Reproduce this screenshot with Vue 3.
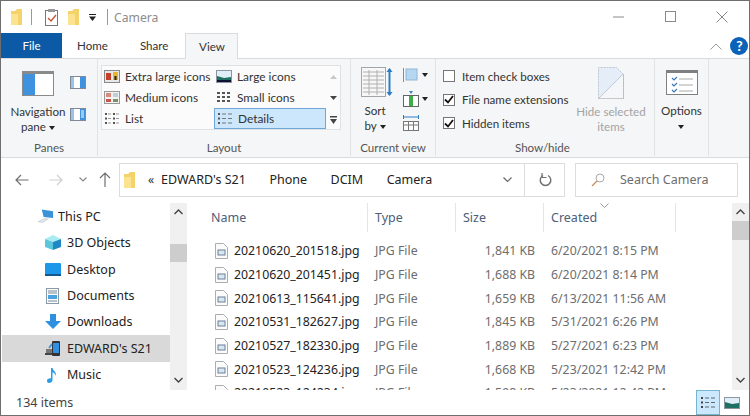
<template>
  <div class="window">
    <!-- title bar -->
    <div class="titlebar">
      <svg class="t-folder" width="11" height="16" viewBox="0 0 11 16"><path d="M0 2h4l2-2h5v16H0z" fill="#f5d36c"/><path d="M0 5h7v11H0z" fill="#fbe38f"/></svg>
      <span class="t-div t-div-a"></span>
      <svg class="t-check" width="14" height="17" viewBox="0 0 14 17"><rect x=".5" y="1.5" width="12" height="15" fill="#fff" stroke="#777"/><rect x="3" y="0" width="7" height="3" fill="#999"/><path d="M3 9l3 3 5-6" fill="none" stroke="#c9502c" stroke-width="1.3"/></svg>
      <svg class="t-folder t-folder-b" width="11" height="16" viewBox="0 0 11 16"><path d="M0 2h4l2-2h5v16H0z" fill="#f5d36c"/><path d="M0 5h7v11H0z" fill="#fbe38f"/></svg>
      <svg class="t-drop" width="7" height="7" viewBox="0 0 7 7"><path d="M0 0h7v1H0zM0 2.500h7L3.500 7z" fill="#222"/></svg>
      <span class="t-div t-div-b"></span>
      <span class="t-name">Camera</span>
      <div class="win-btns">
        <svg width="12" height="12" viewBox="0 0 12 12"><path d="M0 6h11" stroke="#8a8a8a"/></svg>
        <svg width="12" height="12" viewBox="0 0 12 12"><rect x=".5" y=".5" width="10" height="10" fill="none" stroke="#8a8a8a"/></svg>
        <svg width="12" height="12" viewBox="0 0 12 12"><path d="M.5.500l11 11M11.500.500l-11 11" stroke="#8a8a8a"/></svg>
      </div>
    </div>

    <!-- tabs -->
    <div class="tabs">
      <div class="tab-file">File</div>
      <div class="tab tab-home">Home</div>
      <div class="tab tab-share">Share</div>
      <div class="tab-view">View</div>
      <svg class="collapse" width="12" height="7" viewBox="0 0 12 7"><path d="M.5 6.500L6 1l5.500 5.500" fill="none" stroke="#9a9a9a"/></svg>
      <div class="help">?</div>
    </div>

    <!-- ribbon -->
    <div class="ribbon">
      <div class="group g-panes">
        <div class="group-body panes-body">
          <div class="big-col nav-pane">
            <svg width="32" height="25" viewBox="0 0 32 25"><rect x=".5" y=".5" width="31" height="24" fill="#fff" stroke="#8a8a8a"/><rect x="1" y="1" width="30" height="2" fill="#8a8a8a"/><rect x="1" y="3" width="12" height="21" fill="#3f92e0"/></svg>
            <div class="big-label">Navigation<br>pane <i class="caret"></i></div>
          </div>
          <div class="pane-minis">
            <svg width="16" height="13" viewBox="0 0 16 13"><rect x=".5" y=".5" width="15" height="12" fill="#fff" stroke="#7f8a96"/><rect x="10" y="1" width="5" height="11" fill="#3f92e0"/><rect x="1" y="1" width="3" height="11" fill="#9ac3ea"/></svg>
            <svg width="16" height="13" viewBox="0 0 16 13"><rect x=".5" y=".5" width="15" height="12" fill="#fff" stroke="#7f8a96"/><rect x="10" y="1" width="5" height="11" fill="#3f92e0"/><path d="M11 3h3M11 5h3M11 7h3M11 9h3" stroke="#fff"/><rect x="1" y="1" width="3" height="11" fill="#9ac3ea"/></svg>
          </div>
        </div>
        <div class="group-label">Panes</div>
      </div>

      <div class="group g-layout">
        <div class="group-body">
          <div class="gallery">
            <div class="gal-grid">
              <div v-for="v in layouts" :key="v.name" :class="['gal-item', { selected: v.selected }]">
                <svg width="16" height="13" viewBox="0 0 16 13">
                  <template v-if="v.icon === 'xl'">
                    <rect x=".5" y=".5" width="15" height="12" fill="#e8e8e8" stroke="#888"/><rect x="2" y="3" width="5" height="7" fill="#c2402c"/><rect x="9" y="2" width="5" height="8" fill="#e8b52c"/><rect x="10.500" y="6" width="2" height="4" fill="#222"/>
                  </template>
                  <template v-else-if="v.icon === 'large'">
                    <rect x=".5" y=".5" width="15" height="12" fill="#dfeef7" stroke="#8a96a0"/><path d="M1 6l7 2 7-1v5H1z" fill="#1f6f63"/><path d="M1 10h14v2H1z" fill="#113"/>
                  </template>
                  <template v-else-if="v.icon === 'medium'">
                    <rect x=".5" y=".5" width="15" height="12" fill="#f2f2f2" stroke="#999"/><rect x="2" y="2" width="5" height="4" fill="#d98a7a"/><rect x="9" y="2" width="5" height="4" fill="#bcd0dc"/><rect x="2" y="8" width="5" height="3" fill="#c9544a"/><rect x="9" y="8" width="5" height="3" fill="#7a8f6a"/>
                  </template>
                  <template v-else-if="v.icon === 'small'">
                    <path d="M1 1h3v2H1zM6 1h3v2H6zM11 1h3v2h-3zM1 5h3v2H1zM6 5h3v2H6zM11 5h3v2h-3zM1 9h3v2H1zM6 9h3v2H6zM11 9h3v2h-3z" fill="#555"/>
                  </template>
                  <template v-else-if="v.icon === 'list'">
                    <path d="M1 1h2v2H1zM1 5.500h2v2H1zM1 10h2v2H1zM9 1h2v2H9zM9 5.500h2v2H9zM9 10h2v2H9z" fill="#555"/><path d="M4 2h3M4 6.500h3M4 11h3M12 2h3M12 6.500h3M12 11h3" stroke="#999"/>
                  </template>
                  <template v-else>
                    <path d="M1 1h2v2H1zM1 5.500h2v2H1zM1 10h2v2H1z" fill="#555"/><path d="M5 2h4M11 2h4M5 6.500h4M11 6.500h4M5 11h4M11 11h4" stroke="#777"/>
                  </template>
                </svg>
                <span>{{ v.name }}</span>
              </div>
            </div>
            <div class="gal-scroll">
              <svg width="7" height="6" viewBox="0 0 7 6"><path d="M0 5l3.500-4L7 5z" fill="#c8c8c8"/></svg>
              <svg width="7" height="6" viewBox="0 0 7 6"><path d="M0 1h7L3.500 5z" fill="#444"/></svg>
              <svg width="7" height="8" viewBox="0 0 7 8"><path d="M0 0h7v1.500H0zM0 3h7L3.500 8z" fill="#444"/></svg>
            </div>
          </div>
        </div>
        <div class="group-label">Layout</div>
      </div>

      <div class="group g-view">
        <div class="group-body view-body">
          <div class="big-col sort">
            <svg width="32" height="31" viewBox="0 0 32 31"><rect x=".5" y=".5" width="24" height="29" fill="#f7f7f7" stroke="#a5a5a5"/><path d="M2 5h21M2 9h21M2 13h21M2 17h21M2 21h21M2 25h21M8 3v25M16 3v25" stroke="#b0b0b0"/><path d="M28.500 2v26" stroke="#2e7cc4" stroke-width="2"/><path d="M25.500 5l3-4 3 4zM25.500 25l3 4 3-4z" fill="#2e7cc4"/></svg>
            <div class="big-label">Sort<br>by <i class="caret"></i></div>
          </div>
          <div class="view-minis">
            <div class="mini-row">
              <svg width="16" height="16" viewBox="0 0 16 16"><path d="M.5 1v14" stroke="#8a8a8a"/><rect x="3" y="2" width="11" height="11" fill="#b6d7f2" stroke="#8fb5d6"/></svg>
              <i class="caret"></i>
            </div>
            <div class="mini-row">
              <svg width="16" height="16" viewBox="0 0 16 16"><rect x=".5" y="4.500" width="15" height="11" fill="#fff" stroke="#666"/><rect x="6" y="5" width="4" height="10" fill="#3fae49"/><path d="M6 0h4L8 3z" fill="#3f7fc4"/></svg>
              <i class="caret"></i>
            </div>
            <div class="mini-row">
              <svg width="16" height="16" viewBox="0 0 16 16"><path d="M.5 0v4M15.500 0v4M1 2h14" stroke="#2e7cc4"/><rect x=".5" y="6.500" width="15" height="9" fill="#fff" stroke="#777"/><path d="M1 10h14M5.500 7v8M10.500 7v8" stroke="#777"/></svg>
            </div>
          </div>
        </div>
        <div class="group-label">Current view</div>
      </div>

      <div class="group g-show">
        <div class="group-body show-body">
          <div class="checks">
            <div v-for="c in checks" :key="c.label" class="check-row">
              <span class="box">
                <svg v-if="c.on" width="10" height="9" viewBox="0 0 10 9"><path d="M1 4.500l3 3L9 1" fill="none" stroke="#111" stroke-width="1.800"/></svg>
              </span>
              <span>{{ c.label }}</span>
            </div>
          </div>
          <div class="big-col hide-sel">
            <svg width="26" height="32" viewBox="0 0 26 32"><path d="M.5.500h18l7 7v24H.5z" fill="#e4edf8"/><path d="M.5 31.500V.5h18l7 7v24z" fill="none" stroke="#bcc5d0" stroke-dasharray="2 1"/><path d="M1 31L25 7" stroke="#c4ccd6"/><path d="M25 31.500V8L1.500 31.500z" fill="#f5f6f7"/><path d="M.5 31.500h25V7" fill="none" stroke="#aaa" stroke-dasharray="1 1"/></svg>
            <div class="big-label muted">Hide selected<br>items</div>
          </div>
        </div>
        <div class="group-label label-show">Show/hide</div>
      </div>

      <div class="group g-options">
        <div class="group-body">
          <div class="big-col options">
            <svg width="32" height="25" viewBox="0 0 32 25"><rect x=".5" y=".5" width="31" height="24" fill="#fff" stroke="#808080"/><rect x="1" y="1" width="30" height="2" fill="#808080"/><path d="M6 8l2 2 3-3M6 14l2 2 3-3M6 20l2 2 3-3" fill="none" stroke="#3a78b8" stroke-width="1.200"/><path d="M13 9h14M13 15h14M13 21h14" stroke="#aaa"/></svg>
            <div class="big-label">Options<br><i class="caret"></i></div>
          </div>
        </div>
      </div>
    </div>

    <!-- address row -->
    <div class="navrow">
      <svg width="14" height="12" viewBox="0 0 14 12"><path d="M13.500 6H1M6 1L1 6l5 5" fill="none" stroke="#6f6f6f" stroke-width="1.200"/></svg>
      <svg class="fwd" width="14" height="12" viewBox="0 0 14 12"><path d="M.5 6H13M8 1l5 5-5 5" fill="none" stroke="#d0d0d0" stroke-width="1.200"/></svg>
      <svg class="recent" width="8" height="5" viewBox="0 0 8 5"><path d="M.5.500L4 4 7.500.5" fill="none" stroke="#8a8a8a" stroke-width="1.200"/></svg>
      <svg class="up" width="12" height="15" viewBox="0 0 12 15"><path d="M6 15V1M1 6l5-5 5 5" fill="none" stroke="#6f6f6f" stroke-width="1.200"/></svg>
      <div class="address">
        <svg class="addr-folder" width="11" height="16" viewBox="0 0 11 16"><path d="M0 2h4l2-2h5v16H0z" fill="#f5d36c"/><path d="M0 5h7v11H0z" fill="#fbe38f"/></svg>
        <span class="crumb-more">«</span>
        <div class="crumbs">
          <span v-for="c in crumbs" :key="c">{{ c }}</span>
        </div>
        <svg class="addr-chev" width="9" height="6" viewBox="0 0 9 6"><path d="M.5.500l4 4 4-4" fill="none" stroke="#666" stroke-width="1.200"/></svg>
        <div class="refresh">
          <svg width="13" height="14" viewBox="0 0 13 14"><path d="M4 2.500a5.300 5.300 0 1 0 5 0" fill="none" stroke="#6f6f6f" stroke-width="1.400"/><path d="M3 0v4.500h4.500" fill="none" stroke="#6f6f6f" stroke-width="1.200"/></svg>
        </div>
      </div>
      <div class="search">
        <svg width="14" height="14" viewBox="0 0 14 14"><circle cx="9" cy="5" r="4" fill="none" stroke="#a9a9a9"/><path d="M6 8l-5 5" stroke="#c58f5a" stroke-width="1.200"/></svg>
        <span>Search Camera</span>
      </div>
    </div>

    <!-- content -->
    <div class="content">
      <div class="tree">
        <div class="tree-list">
          <div class="tree-item root">
            <svg width="17" height="16" viewBox="0 0 17 16"><path d="M4 1l12 2v7L6 9z" fill="#3a93d8"/><path d="M0 14l6-3h5l-6 4z" fill="#dfe4ea" stroke="#b5bcc4" stroke-width=".5"/></svg>
            <span>This PC</span>
          </div>
          <div class="tree-item">
            <svg width="16" height="15" viewBox="0 0 16 15"><path d="M0 4l8-4 8 4-8 3z" fill="#a8ecf2"/><path d="M0 4l8 3v8l-8-3z" fill="#5cc6dc"/><path d="M16 4L8 7v8l8-3z" fill="#1e88c4"/></svg>
            <span>3D Objects</span>
          </div>
          <div class="tree-item">
            <svg width="16" height="13" viewBox="0 0 16 13"><rect x="0" y="0" width="16" height="12" rx="1" fill="#1e96ea"/><rect x="0" y="11" width="16" height="2" fill="#17578f"/></svg>
            <span>Desktop</span>
          </div>
          <div class="tree-item">
            <svg width="14" height="16" viewBox="0 0 14 16"><rect x=".5" y=".5" width="12" height="15" fill="#fbfbfb" stroke="#8a9aa8"/><path d="M2 3h9M2 5h9" stroke="#7a8a98"/><rect x="2" y="7" width="9" height="4" fill="#4aa3df"/><path d="M2 13h9" stroke="#7a8a98"/></svg>
            <span>Documents</span>
          </div>
          <div class="tree-item">
            <svg width="16" height="15" viewBox="0 0 16 15"><path d="M5 0h6v7h5l-8 8-8-8h5z" fill="#2f8fe0"/></svg>
            <span>Downloads</span>
          </div>
          <div class="tree-item current">
            <svg width="16" height="17" viewBox="0 0 16 17"><rect x="7" y="1" width="8" height="15" rx="1" fill="#333"/><rect x="8" y="3" width="6" height="10" fill="#2f8fe0"/><rect x="1" y="9" width="6" height="4" fill="#777"/><path d="M0 13h7v2H0z" fill="#444"/><path d="M4 8l3-4" stroke="#2f8fe0" stroke-width="1.500"/></svg>
            <span>EDWARD's S21</span>
          </div>
          <div class="tree-item">
            <svg width="16" height="16" viewBox="0 0 16 16"><path d="M6 1h1.500c.5 3 4.500 3.500 3 8-.3-2.500-2-3.500-3-3.800V13c0 1.800-2 3-3.500 3S2 15 2 13.500 4 11 6 11.300z" fill="#2b9be8"/></svg>
            <span>Music</span>
          </div>
        </div>
        <div class="scrollbar">
          <svg width="9" height="6" viewBox="0 0 9 6"><path d="M.5 5l4-4 4 4" fill="none" stroke="#444" stroke-width="1.400"/></svg>
          <div class="thumb thumb-tree"></div>
          <svg class="sb-down" width="9" height="6" viewBox="0 0 9 6"><path d="M.5 1l4 4 4-4" fill="none" stroke="#444" stroke-width="1.400"/></svg>
        </div>
      </div>

      <div class="files">
        <div class="file-area">
          <div class="file-head">
            <div class="col-name head-cell">Name</div>
            <div class="col-type head-cell">Type</div>
            <div class="col-size head-cell">Size</div>
            <div class="col-date head-cell">
              Created
              <svg class="sort-chev" width="9" height="5" viewBox="0 0 9 5"><path d="M.5.500l4 4 4-4" fill="none" stroke="#9a9a9a"/></svg>
            </div>
          </div>
          <div class="file-list">
            <div v-for="f in files" :key="f.name" class="file-row">
              <div class="col-name name-cell">
                <svg width="13" height="16" viewBox="0 0 13 16"><path d="M.5.500h8l4 4v11H.5z" fill="#fbfbfb" stroke="#a8aeb4"/><rect x="3" y="7" width="7" height="5" fill="#dbe7f0" stroke="#68809a"/></svg>
                <span>{{ f.name }}</span>
              </div>
              <div class="col-type muted-cell">JPG File</div>
              <div class="col-size muted-cell">{{ f.size }}</div>
              <div class="col-date muted-cell">{{ f.date }}</div>
            </div>
          </div>
        </div>
        <div class="scrollbar">
          <svg width="9" height="6" viewBox="0 0 9 6"><path d="M.5 5l4-4 4 4" fill="none" stroke="#444" stroke-width="1.400"/></svg>
          <div class="thumb thumb-files"></div>
          <svg class="sb-down" width="9" height="6" viewBox="0 0 9 6"><path d="M.5 1l4 4 4-4" fill="none" stroke="#444" stroke-width="1.400"/></svg>
        </div>
      </div>
    </div>

    <!-- status bar -->
    <div class="status">
      <span>134 items</span>
      <div class="view-btns">
        <div class="vbtn active">
          <svg width="16" height="13" viewBox="0 0 16 13"><path d="M1 1h2v2H1zM1 5.500h2v2H1zM1 10h2v2H1z" fill="#444"/><path d="M5 2h4M11 2h4M5 6.500h4M11 6.500h4M5 11h4M11 11h4" stroke="#666"/></svg>
        </div>
        <div class="vbtn plain">
          <svg width="16" height="12" viewBox="0 0 16 12"><rect x=".5" y=".5" width="15" height="11" fill="#dfeef7" stroke="#8a96a0"/><path d="M1 5l7 2 7-1v5H1z" fill="#1f6f63"/></svg>
        </div>
      </div>
    </div>
  </div>
</template>

<script setup>
const layouts = [
  { name: 'Extra large icons', icon: 'xl' },
  { name: 'Large icons', icon: 'large' },
  { name: 'Medium icons', icon: 'medium' },
  { name: 'Small icons', icon: 'small' },
  { name: 'List', icon: 'list' },
  { name: 'Details', icon: 'details', selected: true },
]

const checks = [
  { label: 'Item check boxes', on: false },
  { label: 'File name extensions', on: true },
  { label: 'Hidden items', on: true },
]

const crumbs = ["EDWARD's S21", 'Phone', 'DCIM', 'Camera']

const files = [
  { name: '20210620_201518.jpg', size: '1,841 KB', date: '6/20/2021 8:15 PM' },
  { name: '20210620_201451.jpg', size: '1,688 KB', date: '6/20/2021 8:14 PM' },
  { name: '20210613_115641.jpg', size: '1,659 KB', date: '6/13/2021 11:56 AM' },
  { name: '20210531_182627.jpg', size: '1,845 KB', date: '5/31/2021 6:26 PM' },
  { name: '20210527_182330.jpg', size: '1,889 KB', date: '5/27/2021 6:23 PM' },
  { name: '20210523_124236.jpg', size: '1,668 KB', date: '5/23/2021 12:42 PM' },
  { name: '20210523_124234.jpg', size: '1,598 KB', date: '5/23/2021 12:42 PM' },
]
</script>

<style>
html, body { margin: 0; background: #fff; }
</style>

<style scoped>
.window {
  width: 750px;
  height: 416px;
  box-sizing: border-box;
  border: 1px solid #6e6e6e;
  display: flex;
  flex-direction: column;
  overflow: hidden;
  background: #fff;
  font-family: "Noto Sans", "Open Sans", sans-serif;
  font-size: 12.5px;
  color: #333;
}

/* title bar */
.titlebar {
  height: 32px;
  display: flex;
  align-items: center;
  flex: none;
}
.t-folder { margin-left: 10px; }
.t-div { width: 1px; height: 16px; background: #999; }
.t-div-a { margin-left: 9px; }
.t-check { margin-left: 13px; }
.t-folder-b { margin-left: 9px; }
.t-drop { margin-left: 10px; }
.t-div-b { margin-left: 11px; }
.t-name { margin-left: 6px; font-size: 12.2px; color: #8c8c8c; }
.win-btns {
  margin-left: auto;
  width: 115px;
  margin-right: 21px;
  display: flex;
  justify-content: space-between;
}

/* tabs */
.tabs {
  height: 25px;
  flex: none;
  display: flex;
  align-items: stretch;
  position: relative;
  font-family: Lato, "Noto Sans", sans-serif;
  font-size: 11.6px;
}
.tab-file {
  width: 61px;
  background: #0c5aa6;
  color: #fff;
  display: flex;
  align-items: center;
  justify-content: center;
}
.tab { display: flex; align-items: center; }
.tab-home { margin-left: 15px; }
.tab-share { margin-left: 32px; }
.tab-view {
  margin-left: 17px;
  width: 53px;
  box-sizing: border-box;
  height: 26px;
  background: #f5f6f7;
  border: 1px solid #dadbdc;
  border-bottom: none;
  display: flex;
  align-items: center;
  justify-content: center;
  position: relative;
  z-index: 1;
}
.collapse { margin: 10px 0 0 472px; }
.help {
  margin: 0 0 0 8px;
  width: 18px;
  height: 18px;
  align-self: center;
  border-radius: 50%;
  background: #0c62b8;
  color: #fff;
  font-size: 14px;
  font-weight: 700;
  line-height: 18px;
  text-align: center;
}

/* ribbon */
.ribbon {
  height: 100px;
  flex: none;
  display: flex;
  background: #f5f6f7;
  border-top: 1px solid #dadbdc;
  border-bottom: 1px solid #dadbdc;
  box-sizing: border-box;
  font-family: Lato, "Noto Sans", sans-serif;
  font-size: 11.6px;
}
.group {
  display: flex;
  flex-direction: column;
  border-right: 1px solid #e2e3e4;
  box-sizing: border-box;
  margin-bottom: 1px;
}
.group-body { flex: 1; display: flex; min-height: 0; }
.group-label {
  height: 16px;
  text-align: center;
  line-height: 16px;
  color: #555;
}
.label-show { text-align: right; padding-right: 84px; }
.g-panes { width: 97px; }
.g-layout { width: 253px; }
.g-view { width: 85px; }
.g-show { width: 219px; }
.g-options { width: 54px; }

.big-col {
  display: flex;
  flex-direction: column;
  align-items: center;
}
.big-label {
  text-align: center;
  line-height: 15px;
  color: #333;
}
.big-label.muted { color: #a3a3a3; }
.caret {
  display: inline-block;
  width: 0;
  height: 0;
  vertical-align: middle;
  border-left: 3.5px solid transparent;
  border-right: 3.5px solid transparent;
  border-top: 4px solid #222;
}

.nav-pane { width: 62px; margin-left: 6px; padding-top: 12px; }
.nav-pane .big-label { margin-top: 8px; }
.pane-minis {
  margin: 17px 0 0 1px;
  display: flex;
  flex-direction: column;
  gap: 19px;
}

.gallery {
  margin: 6px 0 0 3px;
  width: 240px;
  height: 65px;
  box-sizing: border-box;
  border: 1px solid #e0e1e2;
  background: #fbfbfb;
  display: flex;
  font-size: 11.9px;
}
.gal-grid {
  width: 224px;
  display: grid;
  grid-template-columns: 112px 112px;
  grid-auto-rows: 21px;
}
.gal-item {
  display: flex;
  align-items: center;
  gap: 5px;
  padding-left: 2px;
  box-sizing: border-box;
  white-space: nowrap;
}
.gal-item.selected {
  background: #cce6fb;
  border: 1px solid #6fa8d8;
  padding-left: 2px;
}
.gal-scroll {
  flex: 1;
  display: flex;
  flex-direction: column;
  align-items: center;
  gap: 15px;
  padding-top: 8px;
}

.view-body { padding: 8px 0 0 10px; }
.sort { width: 32px; }
.sort .big-label { margin-top: 5px; margin-right: 4px; }
.view-minis {
  margin: 0 0 0 10px;
  display: flex;
  flex-direction: column;
  gap: 8px;
}
.mini-row { display: flex; align-items: center; gap: 3px; }

.checks {
  padding: 8px 0 0 7px;
  width: 132px;
  display: flex;
  flex-direction: column;
  gap: 5.500px;
}
.check-row {
  display: flex;
  align-items: center;
  gap: 7px;
  height: 18px;
  white-space: nowrap;
  color: #333;
}
.box {
  width: 12px;
  height: 12px;
  box-sizing: border-box;
  border: 1px solid #767676;
  background: #fff;
  display: flex;
  align-items: center;
  justify-content: center;
  flex: none;
}
.hide-sel { width: 74px; margin-left: -1px; padding-top: 8px; white-space: nowrap; }
.hide-sel .big-label { margin-top: 5px; }
.options { width: 53px; padding-top: 11px; }
.options .big-label { margin-top: 8px; }

/* address row */
.navrow {
  height: 45px;
  flex: none;
  display: flex;
  align-items: center;
  padding: 0 11px 2px 14px;
  box-sizing: border-box;
}
.fwd { margin-left: 20px; }
.recent { margin-left: 16px; }
.up { margin-left: 12px; }
.address {
  margin-left: 8px;
  width: 446px;
  height: 34px;
  box-sizing: border-box;
  border: 1px solid #dcdcdc;
  display: flex;
  align-items: center;
  padding-left: 4px;
}
.crumb-more { margin-left: 13px; font-size: 12px; }
.crumbs {
  margin-left: 7px;
  width: 342px;
  display: flex;
  gap: 23.500px;
  color: #222;
  white-space: nowrap;
}
.refresh {
  margin-left: 12px;
  padding-left: 14px;
  flex: 1;
  height: 100%;
  display: flex;
  align-items: center;
  border-left: 1px solid #dcdcdc;
}
.search {
  margin-left: 10px;
  flex: 1;
  height: 34px;
  box-sizing: border-box;
  border: 1px solid #dcdcdc;
  display: flex;
  align-items: center;
  padding-left: 15px;
  gap: 15px;
  color: #6d6d6d;
}

/* content */
.content { flex: 1; display: flex; min-height: 0; }
.tree { width: 186px; display: flex; flex: none; }
.tree-list { flex: 1; padding-top: 0; }
.tree-item {
  height: 26.45px;
  margin-left: 1px;
  padding-left: 43px;
  display: flex;
  align-items: center;
  gap: 6px;
  color: #222;
}
.tree-item svg { flex: none; width: 16px; }
.tree-item.root { padding-left: 36px; gap: 4px; }
.tree-item.current { background: #d9d9d9; }

.scrollbar {
  width: 17px;
  flex: none;
  background: #f0f0f0;
  display: flex;
  flex-direction: column;
  align-items: center;
  padding: 6px 0 7px;
  box-sizing: border-box;
}
.thumb { width: 17px; background: #cdcdcd; }
.thumb-tree { height: 18px; margin-top: 29px; }
.thumb-files { height: 19px; margin-top: 6px; }
.sb-down { margin-top: auto; }

.files { flex: 1; display: flex; min-width: 0; }
.file-area { flex: 1; min-width: 0; overflow: hidden; }
.file-head {
  display: flex;
  height: 29px;
  padding-left: 17px;
}
.file-list { padding-top: 7px; font-size: 12.3px; }
.file-row {
  display: flex;
  height: 23.7px;
  align-items: center;
  padding-left: 17px;
}
.col-name { width: 164px; flex: none; box-sizing: border-box; }
.col-type { width: 88px; flex: none; box-sizing: border-box; }
.col-size { width: 88px; flex: none; box-sizing: border-box; }
.col-date { width: 132px; flex: none; box-sizing: border-box; white-space: nowrap; }
.head-cell {
  padding-left: 7px;
  display: flex;
  align-items: center;
  color: #4c607a;
  border-right: 1px solid #e5e5e5;
  position: relative;
}
.file-head .col-name { padding-left: 7px; }
.sort-chev { position: absolute; left: 56px; top: 0; }
.name-cell {
  display: flex;
  align-items: center;
  gap: 6px;
  padding-left: 11px;
  color: #222;
}
.muted-cell { color: #6d6d6d; padding-left: 7px; }
.file-row .col-size { text-align: right; padding: 0 9px 0 0; }

/* status bar */
.status {
  height: 25px;
  flex: none;
  display: flex;
  align-items: center;
  padding-left: 15px;
  color: #444;
}
.view-btns { margin-left: auto; display: flex; align-items: stretch; height: 100%; margin-right: 8px; }
.vbtn {
  width: 24px;
  box-sizing: border-box;
  display: flex;
  align-items: center;
  justify-content: center;
}
.vbtn.plain { width: 18px; }
.vbtn.active { background: #cce8ff; border: 1px solid #76b7cf; margin-right: 3px; }
</style>
